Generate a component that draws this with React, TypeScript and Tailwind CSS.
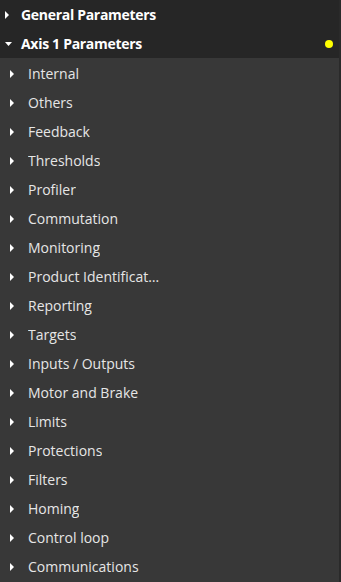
import React from 'react';

const items = [
  'Internal',
  'Others',
  'Feedback',
  'Thresholds',
  'Profiler',
  'Commutation',
  'Monitoring',
  'Product Identification',
  'Reporting',
  'Targets',
  'Inputs / Outputs',
  'Motor and Brake',
  'Limits',
  'Protections',
  'Filters',
  'Homing',
  'Control loop',
  'Communications',
];

function CaretRight({ className }: { className?: string }) {
  return (
    <svg width="4" height="8" viewBox="0 0 4 8" className={className}>
      <path d="M0 0 L4 4 L0 8 Z" fill="#ffffff" />
    </svg>
  );
}

function CaretDown({ className }: { className?: string }) {
  return (
    <svg width="7" height="4" viewBox="0 0 7 4" className={className}>
      <path d="M0 0 L7 0 L3.5 4 Z" fill="#ffffff" />
    </svg>
  );
}

export default function App() {
  return (
    <div
      className="flex h-[582px] w-[341px] bg-[#262626] text-[14px]"
      style={{ fontFamily: '"Open Sans", "Noto Sans", sans-serif' }}
    >
      <div className="flex flex-1 flex-col">
        <div className="flex h-[29px] items-center bg-[#262626]">
          <CaretRight className="ml-[5px] mr-[12px]" />
          <span className="font-bold tracking-[-0.3px] text-white">General Parameters</span>
        </div>
        <div className="flex h-[29px] items-center bg-[#262626]">
          <CaretDown className="ml-[5px] mr-[9px]" />
          <span className="font-bold tracking-[-0.3px] text-white">Axis 1 Parameters</span>
          <span className="ml-auto mr-[6px] h-[8px] w-[8px] rounded-full bg-[#ffff00]" />
        </div>
        <div className="flex flex-1 flex-col bg-[#383838] pt-[1px]">
          {items.map((label) => (
            <div key={label} className="flex h-[29px] items-center">
              <CaretRight className="ml-[10px] mr-[14px]" />
              <span className="max-w-[134px] truncate text-[#e6e6e6]">{label}</span>
            </div>
          ))}
        </div>
      </div>
      <div className="w-[2px] bg-[#2a2a2a]" />
    </div>
  );
}
